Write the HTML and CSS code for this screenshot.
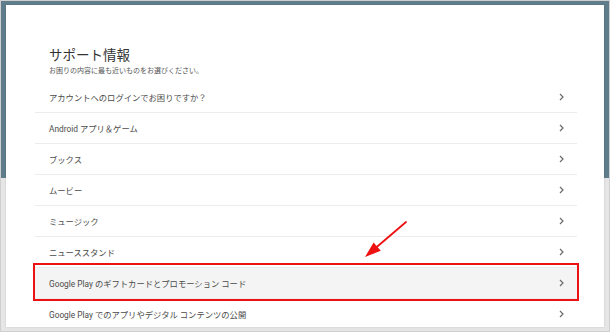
FILE: index.html
```html
<!DOCTYPE html>
<html lang="ja">
<head>
<meta charset="utf-8">
<link rel="stylesheet" href="styles.css">
</head>
<body>
<div class="frame">
  <div class="card">
    <div class="header">
      <h1 class="title">サポート情報</h1>
      <p class="subtitle">お困りの内容に最も近いものをお選びください。</p>
    </div>
    <ul class="list">
      <li class="row"><span>アカウントへのログインでお困りですか？</span><svg class="chev" viewBox="0 0 5 8"><polyline points="1,1 4,4 1,7"/></svg></li>
      <li class="row"><span>Android アプリ＆ゲーム</span><svg class="chev" viewBox="0 0 5 8"><polyline points="1,1 4,4 1,7"/></svg></li>
      <li class="row"><span>ブックス</span><svg class="chev" viewBox="0 0 5 8"><polyline points="1,1 4,4 1,7"/></svg></li>
      <li class="row"><span>ムービー</span><svg class="chev" viewBox="0 0 5 8"><polyline points="1,1 4,4 1,7"/></svg></li>
      <li class="row"><span>ミュージック</span><svg class="chev" viewBox="0 0 5 8"><polyline points="1,1 4,4 1,7"/></svg></li>
      <li class="row"><span>ニューススタンド</span><svg class="chev" viewBox="0 0 5 8"><polyline points="1,1 4,4 1,7"/></svg></li>
      <li class="row row-hl"><span>Google Play のギフトカードとプロモーション コード</span><svg class="chev" viewBox="0 0 5 8"><polyline points="1,1 4,4 1,7"/></svg></li>
      <li class="row"><span>Google Play でのアプリやデジタル コンテンツの公開</span><svg class="chev" viewBox="0 0 5 8"><polyline points="1,1 4,4 1,7"/></svg></li>
    </ul>
  </div>
  <svg class="arrow" width="60" height="50" viewBox="0 0 60 50">
    <line x1="51" y1="7" x2="20" y2="33.5" stroke="#ee1111" stroke-width="1.8" stroke-linecap="round"/>
    <polygon points="10,42 18.6,27.4 25.8,35.8" fill="#ee1111"/>
  </svg>
</div>
</body>
</html>
```

FILE: styles.css
```css
* { box-sizing: border-box; }
html, body { margin: 0; padding: 0; background: #fff; }
body { font-family: Roboto, "Noto Sans CJK JP", sans-serif; }

.frame {
  position: relative;
  width: 610px;
  height: 332px;
  border: 1px solid #cfcfcf;
  background: linear-gradient(#607d8b 0, #607d8b 177px, #e6e6e6 177px);
  padding: 4px 5px 4px 5px;
  overflow: hidden;
}

.card {
  background: #fff;
  height: 322px;
  padding: 0 27px 0 29px;
  overflow: hidden;
  box-shadow: 0 0 2px rgba(0,0,0,0.15);
}

.header { padding: 42px 0 0 14px; }

.title {
  margin: 0;
  font-size: 13.5px;
  line-height: 16px;
  font-weight: 400;
  color: #333;
}

.subtitle {
  margin: 3px 0 6px;
  font-size: 7px;
  line-height: 10px;
  color: #555;
}

.list { list-style: none; margin: 0; padding: 0; }

.row {
  position: relative;
  display: flex;
  align-items: center;
  justify-content: space-between;
  height: 31px;
  padding: 0 13px 0 14px;
  border-bottom: 1px solid #ececec;
  font-size: 8.3px;
  color: #4a4a4a;
}

.row-hl { background: #f4f4f4; }
.row-hl::after {
  content: "";
  position: absolute;
  top: -5px;
  bottom: -3px;
  left: -2px;
  right: -2px;
  border: 2px solid #ee1111;
}

.chev {
  width: 5px;
  height: 8px;
  fill: none;
  stroke: #6a6a6a;
  stroke-width: 1.2;
}

.arrow {
  position: absolute;
  left: 354px;
  top: 214px;
}
```
